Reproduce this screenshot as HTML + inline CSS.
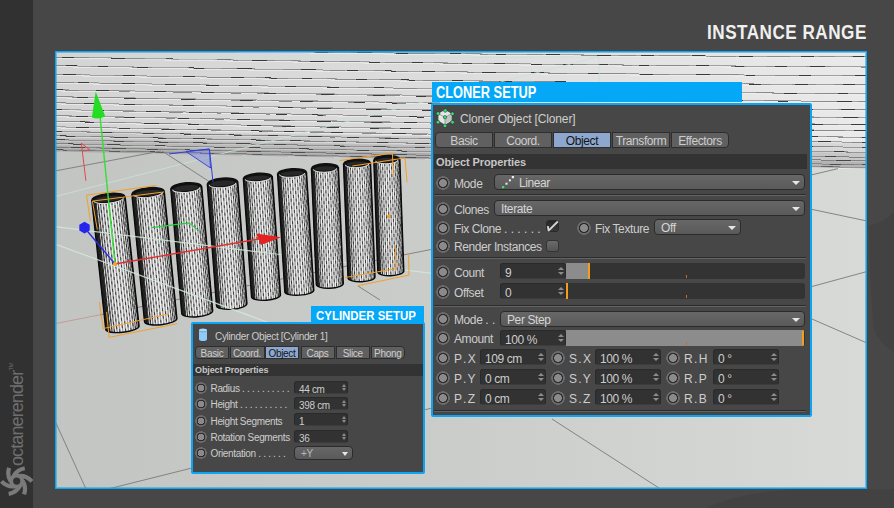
<!DOCTYPE html>
<html><head><meta charset="utf-8">
<style>
*{margin:0;padding:0;box-sizing:border-box}
html,body{width:894px;height:508px;overflow:hidden;background:#474747;font-family:"Liberation Sans",sans-serif}
.abs{position:absolute}
#strip{position:absolute;left:0;top:0;width:33px;height:508px;background:#313131}
#title{position:absolute;left:706.5px;top:20.5px;color:#f0f0f0;font-weight:bold;font-size:20px;line-height:22px;letter-spacing:0.6px;white-space:nowrap;transform-origin:0 0;transform:scaleX(0.855)}
#vp{position:absolute;left:55px;top:51px;width:812px;height:438px;background:#cacbca;overflow:hidden}
#vp svg{position:absolute;left:-55px;top:-51px}
#vpb{position:absolute;left:55px;top:51px;width:812px;height:438px;border:1px solid #0aa6f5;box-shadow:inset 0 0 0 1px rgba(10,166,245,.55)}
.hdr{position:absolute;background:#05a8f7;color:#fff;font-weight:bold;white-space:nowrap;overflow:hidden}
.ht1{position:absolute;left:4px;top:3px;font-size:16px;line-height:16px;transform-origin:0 0;transform:scaleX(0.80)}
.ht2{position:absolute;left:5px;top:4px;font-size:12.5px;line-height:13px;transform-origin:0 0;transform:scaleX(0.915)}
.panel{position:absolute;background:#474747;border:2px solid #0aa6f5;border-radius:2px}
.t,.t2{position:absolute;color:#cdcdcd;white-space:nowrap;font-size:12px;line-height:16px;letter-spacing:-0.4px;margin-top:1px}
.t2{font-size:10px;line-height:14px;letter-spacing:-0.33px;margin-top:1px}
.t2 .dots{letter-spacing:-0.3px}
.sp{letter-spacing:-1px}
.dots{letter-spacing:0}
.ttl{color:#cfcfcf;letter-spacing:-0.15px}
.rad{position:absolute;width:14px;height:14px;border-radius:50%;background:radial-gradient(circle at 50% 50%,#8a8a8a 0,#8a8a8a 3.6px,#2c2c2c 4.1px,#2c2c2c 4.9px,#6c6c6c 5.3px,#6c6c6c 6.8px,rgba(108,108,108,0) 7px)}
.rad.rs{width:11.9px;height:11.9px;background:radial-gradient(circle at 50% 50%,#8a8a8a 0,#8a8a8a 3px,#2c2c2c 3.5px,#2c2c2c 4.2px,#6c6c6c 4.5px,#6c6c6c 5.7px,rgba(108,108,108,0) 5.95px)}
.tab{position:absolute;background:#606060;border:1px solid #2e2e2e;color:#cdcdcd;font-size:12px;line-height:14px;padding-top:0.5px;text-align:center;letter-spacing:-0.4px;white-space:nowrap}
.tab.sel{background:#8ea7cf;color:#141414}
.tab.tl{border-radius:4px 0 0 4px}
.tab.tr{border-radius:0 4px 4px 0}
.tab2{font-size:10px;line-height:11px;padding-top:1px;letter-spacing:-0.33px}
.oph{position:absolute;background:#333333;color:#c6c6c6;font-weight:bold;font-size:11px;line-height:16.5px;padding-left:2px;letter-spacing:-0.1px;white-space:nowrap}
.oph2{font-size:9px;line-height:13px}
.dd{position:absolute;border:1px solid #2b2b2b;border-radius:4px;background:linear-gradient(#676767,#5a5a5a);color:#d5d5d5;font-size:12px;letter-spacing:-0.4px;white-space:nowrap}
.dd span{position:absolute;left:6px;top:0.6px;line-height:14px}
.dd .arr{position:absolute;right:4px;top:5.5px;width:0;height:0;border-left:4px solid transparent;border-right:4px solid transparent;border-top:4.5px solid #e6e6e6}
.dd2{font-size:10px;letter-spacing:-0.33px}
.dd2 span{line-height:12.5px;color:#b8b8b8}
.dd2 .arr{top:4.5px;border-left-width:3.5px;border-right-width:3.5px;border-top-width:4px}
.fld{position:absolute;background:#323232;border:1px solid #2a2a2a;border-bottom-color:#3c3c3c;border-radius:3px;color:#cdcdcd;font-size:12px;letter-spacing:-0.4px;white-space:nowrap}
.fld span{position:absolute;left:4px;top:1.6px;line-height:14px}
.fld .su,.fld .sd{position:absolute;right:1px;width:0;height:0;border-left:3px solid transparent;border-right:3px solid transparent}
.fld .su{top:3px;border-bottom:3.5px solid #8c8c8c}
.fld .sd{top:8px;border-top:3.5px solid #8c8c8c}
.fld2{font-size:10px;letter-spacing:-0.33px}
.fld2 span{line-height:11px}
.fld2 .su{top:2px;border-bottom-width:3px;border-left-width:2.5px;border-right-width:2.5px}
.fld2 .sd{top:6px;border-top-width:3px;border-left-width:2.5px;border-right-width:2.5px}
.sld{position:absolute;background:#333333;border-radius:0 3px 3px 0;overflow:hidden}
.sld b{position:absolute;left:0;top:0;height:16px;background:#8c8c8c}
.sld u{position:absolute;top:0;height:16px;width:2px;background:#f0a01e}
.sld em{position:absolute;left:120px;bottom:1px;width:1px;height:3px;background:#b07820}
.sep{position:absolute;height:2px;border-top:1px solid #2c2c2c;border-bottom:1px solid #636363}
.chk{position:absolute;width:13px;height:12px;border-radius:3px;background:linear-gradient(#6c6c6c,#545454);border:1px solid #333}
.chk.on{background:linear-gradient(#262626,#3a3a3a);border-color:#2a2a2a}
</style></head><body>
<svg style="position:absolute;left:0;top:0" width="894" height="508"><g fill="#424242"><path d="M869 226 Q884 222 894 212 L894 352 Q880 344 874 330 Q870 290 869 226 Z"/><path d="M706 508 Q740 492 800 489 L894 489 L894 508 Z"/></g></svg>
<div id="strip"><svg width="33" height="508" style="position:absolute;left:0;top:0">
<path d="M10.70 481.31Q6.74 475.35 9.10 467.94M13.70 475.90Q17.10 469.61 24.75 468.21M19.61 475.85Q26.76 475.52 31.90 481.37M22.70 481.00Q26.56 487.02 24.07 494.39M19.70 486.30Q16.30 492.59 8.65 493.99M13.98 486.45Q6.84 487.02 1.50 481.37" fill="none" stroke="#7a7a7a" stroke-width="4.2"/>
<circle cx="16.7" cy="481.1" r="5.6" fill="none" stroke="#7a7a7a" stroke-width="4"/>
<text transform="translate(22.6,466) rotate(-90)" font-family="Liberation Sans" font-size="18" letter-spacing="-0.9" fill="#6e6e6e">octanerender</text>
<text transform="translate(13.3,370.5) rotate(-90)" font-family="Liberation Sans" font-size="5.5" fill="#6e6e6e">TM</text>
</svg></div>
<div id="title">INSTANCE RANGE</div>
<div id="vp"><svg width="894" height="508" viewBox="0 0 894 508">
<defs>
<linearGradient id="floorg" x1="55" y1="0" x2="867" y2="0" gradientUnits="userSpaceOnUse">
<stop offset="0" stop-color="#c3c5c3"/><stop offset="0.5" stop-color="#cbcdcb"/><stop offset="1" stop-color="#d7dad7"/></linearGradient>
<linearGradient id="wallg" x1="55" y1="0" x2="867" y2="0" gradientUnits="userSpaceOnUse">
<stop offset="0" stop-color="#d3d4d3"/><stop offset="0.5" stop-color="#dcdddc"/><stop offset="1" stop-color="#e9eae9"/></linearGradient>
<linearGradient id="cylg" x1="0" y1="0" x2="1" y2="0">
<stop offset="0" stop-color="#050505"/><stop offset="0.12" stop-color="#262626"/><stop offset="0.27" stop-color="#b0b0b0"/><stop offset="0.5" stop-color="#d2d2d2"/><stop offset="0.78" stop-color="#c0c0c0"/><stop offset="0.9" stop-color="#4a4a4a"/><stop offset="1" stop-color="#080808"/></linearGradient>
</defs>
<rect x="0" y="0" width="894" height="508" fill="url(#floorg)"/>
<polygon points="55,0 867,0 867,168 55,151" fill="url(#wallg)"/>
<path d="M55 49.1Q461.0 56.2 867 58.1" stroke="#f0f0f0" stroke-width="1" opacity="0.7" fill="none" shape-rendering="crispEdges"/>
<path d="M55 48.0Q461.0 55.1 867 57.0" stroke="#a0a0a0" stroke-width="1" fill="none" shape-rendering="crispEdges"/>
<path d="M44.7 47.8L62.7 48.1M94.0 48.7L110.5 48.9M138.9 49.4L161.2 49.8M177.6 50.0L202.8 50.4M218.7 50.7L242.4 51.0M259.1 51.2L275.9 51.5M301.5 51.8L333.1 52.3M351.2 52.5L370.6 52.7M401.3 53.1L435.3 53.5M464.7 53.8L487.6 54.1M527.1 54.5L543.0 54.7M579.4 55.0L600.2 55.2M618.8 55.4L636.2 55.5M658.9 55.7L690.2 55.9M709.8 56.1L736.4 56.3M767.4 56.5L789.8 56.6M818.5 56.8L834.8 56.8M851.2 56.9L867.0 57.0" stroke="#8a8a8a" stroke-width="1" fill="none" shape-rendering="crispEdges"/>
<path d="M62.1 48.1L73.7 48.3M111.2 49.0L123.5 49.2M152.5 49.6L166.5 49.9M207.4 50.5L218.7 50.7M255.9 51.2L268.5 51.4M314.8 52.0L328.4 52.2M357.1 52.6L372.0 52.8M395.5 53.0L407.6 53.2M450.3 53.7L461.1 53.8M495.7 54.2L505.9 54.3M546.0 54.7L559.8 54.8M597.0 55.2L611.4 55.3M640.8 55.5L654.3 55.6M692.1 55.9L705.0 56.0M738.7 56.3L752.9 56.4M801.2 56.7L813.6 56.7M853.5 56.9L863.8 57.0" stroke="#3a3a3a" stroke-width="1" fill="none" shape-rendering="crispEdges"/>
<path d="M55 58.1Q461.0 65.5 867 68.1" stroke="#f0f0f0" stroke-width="1" opacity="0.7" fill="none" shape-rendering="crispEdges"/>
<path d="M55 57.0Q461.0 64.4 867 67.0" stroke="#a0a0a0" stroke-width="1" fill="none" shape-rendering="crispEdges"/>
<path d="M54.4 57.0L89.3 57.6M124.8 58.2L145.5 58.6M170.2 59.0L198.5 59.5M214.1 59.7L238.3 60.1M257.5 60.4L274.9 60.7M291.3 60.9L321.7 61.4M339.9 61.6L359.9 61.9M384.7 62.2L417.1 62.7M434.1 62.9L458.1 63.2M486.8 63.5L519.5 63.9M555.0 64.3L587.3 64.7M609.2 64.9L632.5 65.1M656.5 65.3L689.2 65.6M728.1 66.0L746.1 66.1M765.6 66.3L785.2 66.4M806.0 66.6L830.7 66.8M860.5 67.0L867.0 67.0" stroke="#8a8a8a" stroke-width="1" fill="none" shape-rendering="crispEdges"/>
<path d="M61.8 57.1L73.6 57.3M110.6 58.0L125.4 58.3M166.1 58.9L178.7 59.1M217.2 59.8L230.6 60.0M252.2 60.3L266.7 60.5M310.1 61.2L324.5 61.4M368.4 62.0L380.3 62.2M412.3 62.6L422.8 62.7M461.9 63.2L472.2 63.4M494.2 63.6L505.2 63.7M530.1 64.0L541.8 64.2M563.4 64.4L573.4 64.5M597.9 64.8L608.4 64.9M639.3 65.2L649.5 65.3M695.7 65.7L708.8 65.8M733.2 66.0L744.5 66.1M774.9 66.4L786.7 66.4M810.4 66.6L824.7 66.7" stroke="#3a3a3a" stroke-width="1" fill="none" shape-rendering="crispEdges"/>
<path d="M55 66.7Q461.0 74.2 867 77.1" stroke="#f0f0f0" stroke-width="1" opacity="0.7" fill="none" shape-rendering="crispEdges"/>
<path d="M55 65.6Q461.0 73.1 867 76.0" stroke="#a0a0a0" stroke-width="1" fill="none" shape-rendering="crispEdges"/>
<path d="M49.0 65.5L73.7 65.9M90.8 66.2L107.8 66.6M131.4 67.0L151.7 67.3M187.4 67.9L205.7 68.2M221.2 68.5L255.3 69.0M283.5 69.4L301.4 69.7M330.0 70.1L345.5 70.4M373.7 70.8L408.3 71.2M444.9 71.7L473.8 72.1M495.3 72.4L517.7 72.6M536.8 72.9L567.3 73.2M595.6 73.5L626.2 73.9M649.4 74.1L668.9 74.3M704.2 74.6L738.9 75.0M775.2 75.3L806.3 75.5M841.8 75.8L867.0 76.0" stroke="#8a8a8a" stroke-width="1" fill="none" shape-rendering="crispEdges"/>
<path d="M65.7 65.8L77.5 66.0M98.4 66.4L108.5 66.6M136.9 67.1L148.2 67.3M188.9 67.9L203.7 68.2M237.1 68.7L251.8 68.9M301.5 69.7L316.2 69.9M347.2 70.4L358.3 70.5M385.1 70.9L396.1 71.1M422.2 71.4L435.3 71.6M482.3 72.2L496.5 72.4M530.9 72.8L544.2 72.9M588.2 73.4L598.6 73.6M638.4 74.0L653.0 74.1M696.4 74.6L710.2 74.7M744.5 75.0L755.4 75.1M799.1 75.5L810.8 75.6M854.8 75.9L867.0 76.0" stroke="#3a3a3a" stroke-width="1" fill="none" shape-rendering="crispEdges"/>
<path d="M55 75.5Q461.0 82.9 867 86.1" stroke="#f0f0f0" stroke-width="1" opacity="0.7" fill="none" shape-rendering="crispEdges"/>
<path d="M55 74.4Q461.0 81.8 867 85.0" stroke="#a0a0a0" stroke-width="1" fill="none" shape-rendering="crispEdges"/>
<path d="M47.0 74.3L81.0 74.9M114.1 75.5L132.5 75.8M150.7 76.1L168.7 76.4M206.3 77.0L237.4 77.5M256.1 77.8L287.6 78.3M327.1 78.9L355.3 79.3M379.0 79.6L405.0 80.0M423.3 80.2L438.6 80.4M477.9 81.0L505.8 81.3M534.0 81.7L567.7 82.1M593.5 82.4L626.0 82.7M661.6 83.1L680.8 83.3M702.1 83.5L723.0 83.7M744.0 83.9L770.7 84.2M792.2 84.4L815.6 84.6M833.9 84.7L867.0 85.0" stroke="#8a8a8a" stroke-width="1" fill="none" shape-rendering="crispEdges"/>
<path d="M63.3 74.6L76.2 74.8M123.4 75.6L135.5 75.8M183.0 76.6L195.5 76.8M231.5 77.4L244.1 77.6M264.6 77.9L276.8 78.1M302.3 78.5L312.4 78.7M356.3 79.3L367.2 79.5M401.4 79.9L415.0 80.1M451.7 80.6L463.4 80.8M498.9 81.2L511.7 81.4M555.2 81.9L565.7 82.0M602.5 82.5L613.8 82.6M642.1 82.9L656.0 83.0M691.2 83.4L704.0 83.5M746.8 84.0L761.4 84.1M794.7 84.4L807.7 84.5M842.9 84.8L855.5 84.9" stroke="#3a3a3a" stroke-width="1" fill="none" shape-rendering="crispEdges"/>
<path d="M55 83.3Q461.0 91.1 867 95.1" stroke="#f0f0f0" stroke-width="1" opacity="0.7" fill="none" shape-rendering="crispEdges"/>
<path d="M55 82.2Q461.0 90.0 867 94.0" stroke="#a0a0a0" stroke-width="1" fill="none" shape-rendering="crispEdges"/>
<path d="M48.6 82.1L74.2 82.6M101.2 83.1L135.0 83.7M167.5 84.3L200.0 84.9M238.6 85.5L258.8 85.9M287.8 86.4L321.6 86.9M357.6 87.5L375.4 87.8M393.4 88.0L417.3 88.4M434.1 88.7L453.9 88.9M470.7 89.2L499.1 89.6M533.7 90.1L566.6 90.5M585.5 90.8L614.8 91.2M646.3 91.5L664.2 91.8M701.3 92.2L735.6 92.6M756.1 92.8L790.1 93.2M815.1 93.5L839.8 93.7" stroke="#8a8a8a" stroke-width="1" fill="none" shape-rendering="crispEdges"/>
<path d="M78.3 82.6L89.1 82.8M122.1 83.5L134.6 83.7M164.8 84.2L175.8 84.4M205.3 85.0L218.9 85.2M239.5 85.6L252.3 85.8M285.5 86.3L295.6 86.5M325.6 87.0L338.7 87.2M374.0 87.7L384.4 87.9M433.9 88.7L447.9 88.9M497.0 89.6L507.5 89.7M535.5 90.1L545.7 90.2M589.1 90.8L600.4 91.0M624.3 91.3L636.4 91.4M683.8 92.0L697.9 92.2M725.6 92.5L736.4 92.6M783.9 93.1L796.8 93.3M837.8 93.7L848.2 93.8" stroke="#3a3a3a" stroke-width="1" fill="none" shape-rendering="crispEdges"/>
<path d="M55 90.9Q461.0 98.7 867 103.1" stroke="#f0f0f0" stroke-width="1" opacity="0.7" fill="none" shape-rendering="crispEdges"/>
<path d="M55 89.8Q461.0 97.6 867 102.0" stroke="#a0a0a0" stroke-width="1" fill="none" shape-rendering="crispEdges"/>
<path d="M55.6 89.8L79.2 90.3M96.0 90.6L129.7 91.2M160.6 91.8L191.6 92.3M208.7 92.6L240.8 93.2M257.5 93.5L289.8 94.0M316.1 94.5L337.9 94.8M366.7 95.3L400.2 95.8M421.9 96.2L439.5 96.4M467.7 96.9L487.5 97.2M505.2 97.4L523.4 97.7M539.7 97.9L558.7 98.2M581.5 98.5L602.6 98.8M636.6 99.2L657.4 99.5M684.9 99.9L703.5 100.1M727.2 100.4L742.5 100.6M763.8 100.8L779.1 101.0M812.4 101.4L838.4 101.7M858.2 101.9L867.0 102.0" stroke="#8a8a8a" stroke-width="1" fill="none" shape-rendering="crispEdges"/>
<path d="M49.3 89.7L63.3 90.0M96.3 90.6L108.8 90.8M153.8 91.7L165.8 91.9M201.0 92.5L214.4 92.7M263.9 93.6L275.6 93.8M320.6 94.6L334.1 94.8M373.2 95.4L385.2 95.6M415.6 96.1L425.9 96.2M449.8 96.6L460.2 96.8M502.4 97.4L513.7 97.5M538.6 97.9L549.0 98.0M594.2 98.7L608.6 98.9M648.7 99.4L660.1 99.5M687.4 99.9L698.8 100.0M732.6 100.5L743.4 100.6M776.8 101.0L788.1 101.1M837.0 101.7L851.8 101.8" stroke="#3a3a3a" stroke-width="1" fill="none" shape-rendering="crispEdges"/>
<path d="M55 97.8Q461.0 106.0 867 111.1" stroke="#f0f0f0" stroke-width="1" opacity="0.7" fill="none" shape-rendering="crispEdges"/>
<path d="M55 96.7Q461.0 104.9 867 110.0" stroke="#a0a0a0" stroke-width="1" fill="none" shape-rendering="crispEdges"/>
<path d="M42.3 96.4L76.6 97.1M99.4 97.6L121.5 98.0M136.5 98.3L159.2 98.8M186.0 99.3L211.1 99.7M231.1 100.1L256.2 100.6M271.3 100.9L291.6 101.2M308.9 101.5L331.9 101.9M347.9 102.2L363.3 102.5M386.0 102.9L405.6 103.2M435.3 103.7L460.8 104.1M494.6 104.7L522.7 105.1M555.6 105.6L588.2 106.1M613.0 106.5L634.5 106.8M674.1 107.4L692.1 107.7M725.2 108.1L753.1 108.5M769.2 108.7L800.9 109.2M838.2 109.6L865.7 110.0" stroke="#8a8a8a" stroke-width="1" fill="none" shape-rendering="crispEdges"/>
<path d="M77.5 97.2L88.2 97.4M123.9 98.1L136.4 98.3M181.5 99.2L195.5 99.4M240.3 100.3L253.2 100.5M300.0 101.4L313.4 101.6M354.2 102.3L365.4 102.5M386.3 102.9L397.0 103.1M427.8 103.6L438.3 103.8M483.4 104.5L496.2 104.7M535.0 105.3L548.1 105.5M588.6 106.1L601.0 106.3M621.1 106.6L635.1 106.8M677.5 107.5L690.0 107.6M726.1 108.1L739.4 108.3M761.4 108.6L775.1 108.8M802.6 109.2L813.0 109.3M841.0 109.7L854.6 109.8" stroke="#3a3a3a" stroke-width="1" fill="none" shape-rendering="crispEdges"/>
<path d="M55 103.9Q461.0 112.9 867 119.1" stroke="#f0f0f0" stroke-width="1" opacity="0.7" fill="none" shape-rendering="crispEdges"/>
<path d="M55 102.8Q461.0 111.8 867 118.0" stroke="#a0a0a0" stroke-width="1" fill="none" shape-rendering="crispEdges"/>
<path d="M57.2 102.8L91.7 103.6M119.1 104.2L141.7 104.7M168.7 105.3L197.4 105.9M231.5 106.6L258.9 107.1M289.9 107.8L306.5 108.1M325.2 108.5L345.3 108.9M378.8 109.5L399.9 109.9M429.1 110.5L444.4 110.8M460.9 111.1L481.3 111.5M513.1 112.1L541.9 112.6M573.8 113.2L594.6 113.5M622.5 114.0L646.8 114.4M673.5 114.9L690.8 115.2M728.2 115.8L747.2 116.1M786.6 116.7L820.4 117.3M835.8 117.5L860.0 117.9" stroke="#8a8a8a" stroke-width="1" fill="none" shape-rendering="crispEdges"/>
<path d="M83.7 103.4L96.0 103.7M124.0 104.3L135.1 104.5M183.4 105.6L194.5 105.8M231.9 106.6L242.7 106.8M278.4 107.5L293.1 107.8M317.1 108.3L331.2 108.6M366.5 109.3L380.9 109.6M422.0 110.4L433.2 110.6M480.1 111.4L492.5 111.7M513.3 112.1L523.3 112.2M558.0 112.9L570.3 113.1M599.4 113.6L610.1 113.8M640.4 114.3L652.0 114.5M697.2 115.3L707.2 115.4M749.7 116.1L763.9 116.4M787.5 116.8L802.1 117.0M843.5 117.6L858.0 117.9" stroke="#3a3a3a" stroke-width="1" fill="none" shape-rendering="crispEdges"/>
<path d="M55 110.6Q461.0 119.6 867 126.1" stroke="#f0f0f0" stroke-width="1" opacity="0.7" fill="none" shape-rendering="crispEdges"/>
<path d="M55 109.5Q461.0 118.5 867 125.0" stroke="#a0a0a0" stroke-width="1" fill="none" shape-rendering="crispEdges"/>
<path d="M46.2 109.3L69.0 109.8M109.0 110.7L135.8 111.3M159.8 111.8L183.4 112.3M205.2 112.7L221.2 113.1M238.7 113.4L270.4 114.1M292.6 114.5L326.3 115.2M347.5 115.6L367.8 116.0M395.6 116.6L414.4 117.0M438.7 117.4L472.9 118.1M510.0 118.8L541.2 119.4M572.0 119.9L605.3 120.5M643.8 121.2L669.8 121.7M702.7 122.3L718.7 122.5M752.0 123.1L776.1 123.5M809.9 124.1L837.8 124.5M859.9 124.9L867.0 125.0" stroke="#8a8a8a" stroke-width="1" fill="none" shape-rendering="crispEdges"/>
<path d="M50.1 109.4L62.5 109.7M92.8 110.3L104.3 110.6M146.4 111.5L161.3 111.8M189.1 112.4L202.4 112.7M231.4 113.3L244.2 113.5M276.0 114.2L286.9 114.4M311.7 114.9L322.8 115.1M369.9 116.1L382.4 116.3M409.0 116.9L423.6 117.1M473.4 118.1L485.7 118.3M509.9 118.8L520.8 119.0M543.6 119.4L555.3 119.6M578.0 120.0L589.2 120.2M617.0 120.7L629.8 121.0M676.4 121.8L690.2 122.0M722.6 122.6L734.6 122.8M770.4 123.4L782.2 123.6M812.4 124.1L822.7 124.3M851.0 124.7L865.9 125.0" stroke="#3a3a3a" stroke-width="1" fill="none" shape-rendering="crispEdges"/>
<path d="M55 116.8Q461.0 125.5 867 132.1" stroke="#f0f0f0" stroke-width="1" opacity="0.7" fill="none" shape-rendering="crispEdges"/>
<path d="M55 115.7Q461.0 124.4 867 131.0" stroke="#a0a0a0" stroke-width="1" fill="none" shape-rendering="crispEdges"/>
<path d="M50.1 115.6L77.7 116.2M114.3 117.0L133.6 117.4M155.4 117.8L175.3 118.2M200.3 118.7L224.2 119.2M263.1 120.0L295.1 120.7M331.9 121.4L347.3 121.7M363.1 122.0L392.3 122.6M429.7 123.3L454.2 123.7M483.9 124.3L498.9 124.6M523.6 125.0L557.2 125.7M592.8 126.3L624.9 126.9M664.2 127.6L684.2 127.9M701.9 128.2L720.0 128.5M748.1 129.0L776.7 129.5M815.3 130.1L844.7 130.6" stroke="#8a8a8a" stroke-width="1" fill="none" shape-rendering="crispEdges"/>
<path d="M75.6 116.1L87.9 116.4M124.4 117.2L134.6 117.4M178.1 118.3L189.3 118.5M236.9 119.5L250.1 119.8M279.2 120.3L289.8 120.6M317.4 121.1L330.6 121.4M371.5 122.2L382.1 122.4M404.2 122.8L416.8 123.0M454.3 123.7L466.2 124.0M493.0 124.5L506.0 124.7M526.3 125.1L537.8 125.3M571.6 125.9L586.4 126.2M625.7 126.9L640.2 127.1M674.4 127.7L685.6 127.9M713.0 128.4L727.8 128.7M768.9 129.4L780.5 129.6M801.1 129.9L813.6 130.1M853.9 130.8L866.0 131.0" stroke="#3a3a3a" stroke-width="1" fill="none" shape-rendering="crispEdges"/>
<path d="M55 122.4Q461.0 131.4 867 138.6" stroke="#f0f0f0" stroke-width="1" opacity="0.7" fill="none" shape-rendering="crispEdges"/>
<path d="M55 121.3Q461.0 130.3 867 137.5" stroke="#a0a0a0" stroke-width="1" fill="none" shape-rendering="crispEdges"/>
<path d="M55.0 121.3L88.5 122.0M109.2 122.5L124.9 122.8M148.3 123.3L171.7 123.8M203.8 124.5L222.8 124.9M257.7 125.7L287.5 126.3M315.1 126.9L334.2 127.3M373.4 128.1L394.7 128.5M430.2 129.2L449.8 129.6M470.3 130.0L500.5 130.6M522.9 131.1L557.0 131.7M584.3 132.3L603.1 132.6M623.7 133.0L647.0 133.5M678.7 134.1L712.6 134.7M731.3 135.0L754.2 135.5M774.5 135.8L809.0 136.5M827.5 136.8L843.5 137.1M860.0 137.4L867.0 137.5" stroke="#8a8a8a" stroke-width="1" fill="none" shape-rendering="crispEdges"/>
<path d="M80.3 121.9L94.0 122.2M143.9 123.2L158.6 123.6M188.5 124.2L199.4 124.4M247.5 125.5L261.2 125.7M282.2 126.2L295.5 126.5M326.8 127.1L338.7 127.4M368.7 128.0L379.5 128.2M399.6 128.6L411.0 128.8M441.5 129.4L456.3 129.7M480.0 130.2L494.8 130.5M521.1 131.0L532.9 131.3M577.5 132.1L591.6 132.4M624.6 133.0L634.8 133.2M669.0 133.9L680.9 134.1M728.5 135.0L739.4 135.2M770.4 135.8L784.9 136.0M805.8 136.4L817.8 136.6M862.2 137.4L867.0 137.5" stroke="#3a3a3a" stroke-width="1" fill="none" shape-rendering="crispEdges"/>
<path d="M55 127.9Q461.0 136.4 867 143.6" stroke="#f0f0f0" stroke-width="1" opacity="0.7" fill="none" shape-rendering="crispEdges"/>
<path d="M55 126.8Q461.0 135.3 867 142.5" stroke="#a0a0a0" stroke-width="1" fill="none" shape-rendering="crispEdges"/>
<path d="M36.0 126.4L52.3 126.7M90.3 127.5L110.4 128.0M144.1 128.7L177.1 129.3M200.6 129.8L221.0 130.2M260.0 131.0L287.3 131.6M308.9 132.0L338.2 132.6M361.1 133.0L381.6 133.4M396.7 133.7L426.8 134.3M464.7 135.1L492.4 135.6M531.0 136.3L546.5 136.6M567.3 137.0L591.8 137.5M630.7 138.2L664.8 138.9M689.5 139.3L709.5 139.7M735.3 140.1L760.1 140.6M798.3 141.3L817.0 141.6M852.0 142.2L867.0 142.5" stroke="#8a8a8a" stroke-width="1" fill="none" shape-rendering="crispEdges"/>
<path d="M75.9 127.2L88.9 127.5M118.8 128.1L130.4 128.4M161.2 129.0L175.1 129.3M197.5 129.8L208.5 130.0M251.1 130.8L262.3 131.1M284.3 131.5L294.4 131.7M331.0 132.4L342.6 132.7M392.1 133.7L406.5 133.9M456.1 134.9L467.4 135.1M490.0 135.6L500.4 135.8M535.4 136.4L548.9 136.7M582.3 137.3L593.5 137.5M626.0 138.1L639.1 138.4M679.3 139.1L693.1 139.4M738.5 140.2L751.8 140.4M775.5 140.9L789.7 141.1M818.5 141.6L831.3 141.9M862.5 142.4L867.0 142.5" stroke="#3a3a3a" stroke-width="1" fill="none" shape-rendering="crispEdges"/>
<path d="M55 132.4Q461.0 141.0 867 148.6" stroke="#f0f0f0" stroke-width="1" opacity="0.7" fill="none" shape-rendering="crispEdges"/>
<path d="M55 131.3Q461.0 139.9 867 147.5" stroke="#a0a0a0" stroke-width="1" fill="none" shape-rendering="crispEdges"/>
<path d="M42.4 131.0L62.3 131.5M81.2 131.9L113.8 132.5M143.3 133.2L164.8 133.6M189.7 134.1L224.6 134.9M252.3 135.4L271.9 135.8M307.1 136.6L335.2 137.1M374.9 137.9L392.0 138.3M418.9 138.8L450.2 139.4M486.3 140.2L519.5 140.8M535.6 141.1L556.4 141.5M574.4 141.9L593.2 142.3M632.5 143.0L659.2 143.6M697.4 144.3L719.9 144.7M756.5 145.4L780.5 145.9M802.0 146.3L832.6 146.9" stroke="#8a8a8a" stroke-width="1" fill="none" shape-rendering="crispEdges"/>
<path d="M49.2 131.2L62.2 131.5M100.8 132.3L111.9 132.5M143.0 133.2L153.7 133.4M179.8 133.9L191.1 134.2M229.0 134.9L242.3 135.2M268.4 135.8L278.5 136.0M308.3 136.6L321.7 136.8M347.2 137.4L358.8 137.6M384.9 138.1L398.9 138.4M435.3 139.1L445.6 139.4M468.7 139.8L480.6 140.1M517.1 140.8L530.3 141.0M553.1 141.5L563.9 141.7M604.8 142.5L616.8 142.7M645.3 143.3L656.8 143.5M705.4 144.4L717.0 144.7M754.0 145.4L765.8 145.6M798.3 146.2L812.6 146.5M862.5 147.4L867.0 147.5" stroke="#3a3a3a" stroke-width="1" fill="none" shape-rendering="crispEdges"/>
<path d="M55 136.9Q461.0 145.5 867 153.5" stroke="#f0f0f0" stroke-width="1" opacity="0.7" fill="none" shape-rendering="crispEdges"/>
<path d="M55 135.8Q461.0 144.4 867 152.4" stroke="#a0a0a0" stroke-width="1" fill="none" shape-rendering="crispEdges"/>
<path d="M56.8 135.8L75.9 136.2M91.1 136.6L124.1 137.3M149.7 137.8L181.1 138.5M206.3 139.0L238.9 139.7M265.4 140.2L283.7 140.6M299.1 140.9L325.1 141.5M356.1 142.1L389.3 142.8M406.5 143.2L434.0 143.7M458.2 144.2L483.3 144.7M502.0 145.1L522.6 145.5M550.7 146.1L584.2 146.8M601.9 147.1L626.7 147.6M661.8 148.3L696.2 149.0M716.1 149.4L733.6 149.8M772.2 150.5L806.7 151.2M833.8 151.7L849.9 152.1" stroke="#8a8a8a" stroke-width="1" fill="none" shape-rendering="crispEdges"/>
<path d="M60.5 135.9L75.0 136.2M113.6 137.0L127.8 137.3M152.6 137.9L166.5 138.2M193.2 138.7L205.2 139.0M250.6 139.9L264.7 140.2M290.2 140.8L301.3 141.0M333.3 141.6L345.9 141.9M377.4 142.6L388.0 142.8M415.4 143.3L429.0 143.6M476.0 144.6L486.2 144.8M523.0 145.5L536.8 145.8M558.0 146.2L572.2 146.5M595.7 147.0L608.7 147.3M645.2 148.0L658.3 148.3M687.5 148.9L699.6 149.1M737.1 149.8L749.2 150.1M789.0 150.9L801.2 151.1M834.4 151.8L844.5 152.0" stroke="#3a3a3a" stroke-width="1" fill="none" shape-rendering="crispEdges"/>
<path d="M55 140.8Q461.0 149.8 867 158.5" stroke="#f0f0f0" stroke-width="1" opacity="0.7" fill="none" shape-rendering="crispEdges"/>
<path d="M55 139.7Q461.0 148.7 867 157.4" stroke="#a0a0a0" stroke-width="1" fill="none" shape-rendering="crispEdges"/>
<path d="M49.7 139.6L69.4 140.0M103.5 140.8L134.1 141.5M160.5 142.0L179.1 142.5M206.0 143.0L223.1 143.4M241.3 143.8L264.9 144.3M282.2 144.7L306.1 145.2M333.8 145.9L349.6 146.2M380.5 146.9L397.2 147.2M430.5 148.0L461.1 148.6M488.9 149.2L504.9 149.6M532.5 150.2L555.1 150.7M593.9 151.5L611.6 151.9M648.0 152.7L682.9 153.4M716.2 154.2L747.5 154.8M767.4 155.3L802.0 156.0M829.3 156.6L863.5 157.3" stroke="#8a8a8a" stroke-width="1" fill="none" shape-rendering="crispEdges"/>
<path d="M51.6 139.6L65.5 139.9M113.5 141.0L123.8 141.2M154.3 141.9L168.1 142.2M192.9 142.8L207.3 143.1M235.6 143.7L249.7 144.0M274.0 144.5L286.5 144.8M334.1 145.9L345.1 146.1M373.0 146.7L385.5 147.0M415.1 147.6L425.3 147.9M450.8 148.4L461.6 148.6M509.7 149.7L523.1 150.0M569.9 151.0L580.8 151.2M624.3 152.2L634.9 152.4M670.8 153.2L684.0 153.5M714.8 154.1L729.2 154.4M765.8 155.2L778.7 155.5M825.2 156.5L835.7 156.7" stroke="#3a3a3a" stroke-width="1" fill="none" shape-rendering="crispEdges"/>
<path d="M55 144.7Q461.0 153.4 867 162.1" stroke="#f0f0f0" stroke-width="1" opacity="0.7" fill="none" shape-rendering="crispEdges"/>
<path d="M55 143.6Q461.0 152.3 867 161.0" stroke="#a0a0a0" stroke-width="1" fill="none" shape-rendering="crispEdges"/>
<path d="M53.9 143.6L76.8 144.1M111.7 144.8L132.0 145.3M171.8 146.1L198.3 146.7M222.3 147.2L252.6 147.8M278.7 148.4L297.2 148.8M330.8 149.5L346.8 149.9M382.3 150.6L402.3 151.0M433.3 151.7L468.0 152.5M497.6 153.1L525.9 153.7M548.7 154.2L563.8 154.5M579.6 154.8L597.6 155.2M628.0 155.9L651.7 156.4M679.5 157.0L712.4 157.7M730.7 158.1L750.2 158.5M781.6 159.2L797.0 159.5M812.1 159.8L834.2 160.3M851.8 160.7L867.0 161.0" stroke="#8a8a8a" stroke-width="1" fill="none" shape-rendering="crispEdges"/>
<path d="M68.3 143.9L81.3 144.2M107.4 144.7L120.5 145.0M154.8 145.7L165.5 146.0M213.6 147.0L224.8 147.2M249.3 147.8L259.7 148.0M298.9 148.8L313.2 149.1M356.7 150.1L368.7 150.3M396.6 150.9L406.7 151.1M446.0 152.0L458.9 152.3M489.4 152.9L502.6 153.2M535.9 153.9L550.6 154.2M592.6 155.1L603.8 155.4M650.9 156.4L661.2 156.6M697.1 157.4L709.1 157.6M736.3 158.2L746.6 158.4M789.9 159.3L800.0 159.6M836.5 160.3L851.2 160.7" stroke="#3a3a3a" stroke-width="1" fill="none" shape-rendering="crispEdges"/>
<path d="M55 148.1Q461.0 157.1 867 166.1" stroke="#f0f0f0" stroke-width="1" opacity="0.7" fill="none" shape-rendering="crispEdges"/>
<path d="M55 147.0Q461.0 156.0 867 165.0" stroke="#a0a0a0" stroke-width="1" fill="none" shape-rendering="crispEdges"/>
<path d="M41.0 146.7L68.1 147.3M95.8 147.9L123.7 148.5M159.0 149.3L177.5 149.7M200.2 150.2L221.2 150.7M237.4 151.0L270.2 151.8M304.8 152.5L334.1 153.2M349.3 153.5L381.1 154.2M414.8 155.0L439.1 155.5M472.6 156.3L496.7 156.8M517.3 157.2L534.4 157.6M555.2 158.1L571.0 158.4M594.4 159.0L624.4 159.6M656.8 160.3L688.7 161.0M721.5 161.8L741.8 162.2M770.6 162.9L794.4 163.4M829.1 164.2L854.5 164.7" stroke="#8a8a8a" stroke-width="1" fill="none" shape-rendering="crispEdges"/>
<path d="M70.7 147.3L85.5 147.7M112.0 148.3L126.4 148.6M146.9 149.0L158.2 149.3M185.3 149.9L199.0 150.2M247.3 151.3L261.0 151.6M290.9 152.2L305.3 152.5M335.1 153.2L346.3 153.5M393.5 154.5L406.7 154.8M447.5 155.7L460.8 156.0M510.2 157.1L522.5 157.4M567.7 158.4L581.2 158.7M626.9 159.7L639.1 159.9M680.8 160.9L693.7 161.2M722.9 161.8L734.0 162.1M772.7 162.9L783.1 163.1M830.4 164.2L841.1 164.4M861.9 164.9L867.0 165.0" stroke="#3a3a3a" stroke-width="1" fill="none" shape-rendering="crispEdges"/>
<path d="M55 150.9Q461.0 159.8 867 168.7" stroke="#f0f0f0" stroke-width="1" opacity="0.7" fill="none" shape-rendering="crispEdges"/>
<path d="M55 149.8Q461.0 158.7 867 167.6" stroke="#a0a0a0" stroke-width="1" fill="none" shape-rendering="crispEdges"/>
<path d="M45.3 149.6L63.2 150.0M78.9 150.3L94.7 150.7M127.0 151.4L154.7 152.0M187.2 152.7L216.9 153.3M233.5 153.7L260.3 154.3M284.4 154.8L315.8 155.5M351.3 156.3L384.1 157.0M400.7 157.4L433.1 158.1M471.0 158.9L504.8 159.7M522.5 160.0L541.6 160.5M559.4 160.9L575.1 161.2M611.3 162.0L642.6 162.7M673.4 163.4L704.9 164.0M735.7 164.7L756.4 165.2M773.9 165.6L790.9 165.9M824.8 166.7L843.9 167.1M866.9 167.6L867.0 167.6" stroke="#8a8a8a" stroke-width="1" fill="none" shape-rendering="crispEdges"/>
<path d="M55.3 149.8L66.7 150.1M108.2 151.0L120.0 151.2M149.6 151.9L164.4 152.2M199.6 153.0L213.8 153.3M252.4 154.1L262.5 154.3M294.9 155.1L307.1 155.3M350.3 156.3L362.0 156.5M403.1 157.4L415.8 157.7M442.3 158.3L456.6 158.6M479.4 159.1L493.5 159.4M518.6 160.0L528.6 160.2M554.6 160.8L568.5 161.1M617.8 162.1L627.8 162.4M662.5 163.1L675.0 163.4M718.9 164.4L729.8 164.6M764.7 165.4L776.4 165.6M821.4 166.6L832.7 166.8" stroke="#3a3a3a" stroke-width="1" fill="none" shape-rendering="crispEdges"/>
<polygon points="55,131 867,143.0 867,153.0 55,139" fill="#6a6a6a" opacity="0.14"/>
<polygon points="55,139 867,153.0 867,161.75 55,146" fill="#6a6a6a" opacity="0.28"/>
<polygon points="55,146 867,161.75 867,168.0 55,151" fill="#6a6a6a" opacity="0.42"/>
<path d="M55 60L598.6 56.8L600 103M598.6 56.8L55 196.6" stroke="#c8e4d2" stroke-width="1" fill="none" opacity="0.8"/>
<line x1="55" y1="151" x2="867" y2="168" stroke="#9a9a9a" stroke-width="0.8"/>
<line x1="55" y1="171" x2="161" y2="151" stroke="#7a7a7a" stroke-width="0.9"/>
<line x1="162" y1="151" x2="213" y2="184" stroke="#7a7a7a" stroke-width="0.9"/>
<line x1="55" y1="421" x2="86" y2="489" stroke="#7a7a7a" stroke-width="0.9"/>
<line x1="108" y1="489" x2="432" y2="408" stroke="#7a7a7a" stroke-width="0.9"/>
<line x1="552" y1="419" x2="690" y2="508" stroke="#7a7a7a" stroke-width="0.9"/>
<line x1="812" y1="286.5" x2="867" y2="271.5" stroke="#7a7a7a" stroke-width="0.9"/>
<line x1="812" y1="319" x2="867" y2="343" stroke="#7a7a7a" stroke-width="0.9"/>
<line x1="812" y1="209.4" x2="867" y2="221" stroke="#7a7a7a" stroke-width="0.9"/>
<line x1="812" y1="174.8" x2="838" y2="168.6" stroke="#7a7a7a" stroke-width="0.9"/>
<line x1="100" y1="314.8" x2="432" y2="249.3" stroke="#7a7a7a" stroke-width="0.9"/>
<line x1="358" y1="286" x2="380" y2="300" stroke="#7a7a7a" stroke-width="0.9"/>
<line x1="280" y1="254.5" x2="432" y2="273.3" stroke="#d2eadc" stroke-width="1.2" opacity="0.85"/>
<g transform="translate(108.4,198) rotate(-6.17)"><path d="M-16.75 0 L-16.75 130.3 A16.75 4.8 0 0 0 16.75 130.3 L16.75 0 Z" fill="url(#cylg)"/><path d="M-11.84 3.09L-11.84 133.34M-9.61 3.68L-9.61 133.93M-7.08 4.16L-7.08 134.41M-4.34 4.51L-4.34 134.77M-1.46 4.73L-1.46 134.98M1.46 4.80L1.46 135.05M4.34 4.73L4.34 134.98M7.08 4.51L7.08 134.77M9.61 4.16L9.61 134.41M11.84 3.68L11.84 133.93M13.72 3.09L13.72 133.34M15.18 2.40L15.18 132.65" stroke="#ffffff" stroke-width="0.9" fill="none" opacity="0.9"/><path d="M-16.50 0.83L-16.50 131.09M-15.74 1.64L-15.74 131.90M-14.51 2.40L-14.51 132.65M-12.83 3.09L-12.83 133.34M-10.77 3.68L-10.77 133.93M-8.38 4.16L-8.38 134.41M-5.73 4.51L-5.73 134.77M-2.91 4.73L-2.91 134.98M-0.00 4.80L-0.00 135.05M2.91 4.73L2.91 134.98M5.73 4.51L5.73 134.77M8.37 4.16L8.37 134.41M10.77 3.68L10.77 133.93M12.83 3.09L12.83 133.34M14.51 2.40L14.51 132.65M15.74 1.64L15.74 131.90M16.50 0.83L16.50 131.09" stroke="#505050" stroke-width="0.5" fill="none" opacity="0.7"/><g stroke="#151515" stroke-width="0.85" stroke-dasharray="3 4.5" fill="none" opacity="0.8"><path d="M-16.50 0.83L-16.50 131.09" stroke-dashoffset="4.0"/><path d="M-15.74 1.64L-15.74 131.90" stroke-dashoffset="0.2"/><path d="M-14.51 2.40L-14.51 132.65" stroke-dashoffset="4.3"/><path d="M-12.83 3.09L-12.83 133.34" stroke-dashoffset="0.4"/><path d="M-10.77 3.68L-10.77 133.93" stroke-dashoffset="3.8"/><path d="M-8.38 4.16L-8.38 134.41" stroke-dashoffset="0.5"/><path d="M-5.73 4.51L-5.73 134.77" stroke-dashoffset="3.8"/><path d="M-2.91 4.73L-2.91 134.98" stroke-dashoffset="0.6"/><path d="M-0.00 4.80L-0.00 135.05" stroke-dashoffset="4.3"/><path d="M2.91 4.73L2.91 134.98" stroke-dashoffset="0.6"/><path d="M5.73 4.51L5.73 134.77" stroke-dashoffset="4.3"/><path d="M8.37 4.16L8.37 134.41" stroke-dashoffset="0.3"/><path d="M10.77 3.68L10.77 133.93" stroke-dashoffset="4.1"/><path d="M12.83 3.09L12.83 133.34" stroke-dashoffset="0.3"/><path d="M14.51 2.40L14.51 132.65" stroke-dashoffset="4.5"/><path d="M15.74 1.64L15.74 131.90" stroke-dashoffset="0.1"/><path d="M16.50 0.83L16.50 131.09" stroke-dashoffset="4.5"/></g><path d="M-16.75 0 L-16.75 130.3 A16.75 4.8 0 0 0 16.75 130.3 L16.75 0" stroke="#0a0a0a" stroke-width="1.4" fill="none"/><ellipse cx="0" cy="0" rx="17.05" ry="5.1" fill="#101010"/><ellipse cx="0" cy="0.8" rx="13.75" ry="2.8" fill="#333333" opacity="0.7"/><path d="M-14.95 1.2 A14.95 4.0 0 0 0 14.95 1.2" stroke="#d8d8d8" stroke-width="1" fill="none"/></g>
<g transform="translate(148,192.2) rotate(-5.68)"><path d="M-16.25 0 L-16.25 128.4 A16.25 4.8 0 0 0 16.25 128.4 L16.25 0 Z" fill="url(#cylg)"/><path d="M-11.49 3.09L-11.49 131.51M-9.32 3.68L-9.32 132.11M-6.87 4.16L-6.87 132.59M-4.21 4.51L-4.21 132.94M-1.42 4.73L-1.42 133.16M1.42 4.80L1.42 133.23M4.21 4.73L4.21 133.16M6.87 4.51L6.87 132.94M9.32 4.16L9.32 132.59M11.49 3.68L11.49 132.11M13.31 3.09L13.31 131.51M14.73 2.40L14.73 130.83" stroke="#ffffff" stroke-width="0.9" fill="none" opacity="0.9"/><path d="M-16.00 0.83L-16.00 129.26M-15.27 1.64L-15.27 130.07M-14.07 2.40L-14.07 130.83M-12.45 3.09L-12.45 131.51M-10.45 3.68L-10.45 132.11M-8.13 4.16L-8.13 132.59M-5.56 4.51L-5.56 132.94M-2.82 4.73L-2.82 133.16M-0.00 4.80L-0.00 133.23M2.82 4.73L2.82 133.16M5.56 4.51L5.56 132.94M8.12 4.16L8.12 132.59M10.45 3.68L10.45 132.11M12.45 3.09L12.45 131.51M14.07 2.40L14.07 130.83M15.27 1.64L15.27 130.07M16.00 0.83L16.00 129.26" stroke="#505050" stroke-width="0.5" fill="none" opacity="0.7"/><g stroke="#151515" stroke-width="0.85" stroke-dasharray="3 4.5" fill="none" opacity="0.8"><path d="M-16.00 0.83L-16.00 129.26" stroke-dashoffset="3.8"/><path d="M-15.27 1.64L-15.27 130.07" stroke-dashoffset="0.2"/><path d="M-14.07 2.40L-14.07 130.83" stroke-dashoffset="4.0"/><path d="M-12.45 3.09L-12.45 131.51" stroke-dashoffset="0.7"/><path d="M-10.45 3.68L-10.45 132.11" stroke-dashoffset="4.2"/><path d="M-8.13 4.16L-8.13 132.59" stroke-dashoffset="0.3"/><path d="M-5.56 4.51L-5.56 132.94" stroke-dashoffset="4.5"/><path d="M-2.82 4.73L-2.82 133.16" stroke-dashoffset="0.2"/><path d="M-0.00 4.80L-0.00 133.23" stroke-dashoffset="4.1"/><path d="M2.82 4.73L2.82 133.16" stroke-dashoffset="0.4"/><path d="M5.56 4.51L5.56 132.94" stroke-dashoffset="4.4"/><path d="M8.12 4.16L8.12 132.59" stroke-dashoffset="0.6"/><path d="M10.45 3.68L10.45 132.11" stroke-dashoffset="4.3"/><path d="M12.45 3.09L12.45 131.51" stroke-dashoffset="0.3"/><path d="M14.07 2.40L14.07 130.83" stroke-dashoffset="4.0"/><path d="M15.27 1.64L15.27 130.07" stroke-dashoffset="0.1"/><path d="M16.00 0.83L16.00 129.26" stroke-dashoffset="4.4"/></g><path d="M-16.25 0 L-16.25 128.4 A16.25 4.8 0 0 0 16.25 128.4 L16.25 0" stroke="#0a0a0a" stroke-width="1.4" fill="none"/><ellipse cx="0" cy="0" rx="16.55" ry="5.1" fill="#101010"/><ellipse cx="0" cy="0.8" rx="13.25" ry="2.8" fill="#333333" opacity="0.7"/><path d="M-14.45 1.2 A14.45 4.0 0 0 0 14.45 1.2" stroke="#d8d8d8" stroke-width="1" fill="none"/></g>
<g transform="translate(186.2,187.2) rotate(-5.04)"><path d="M-15.5 0 L-15.5 125.3 A15.5 4.8 0 0 0 15.5 125.3 L15.5 0 Z" fill="url(#cylg)"/><path d="M-10.96 3.09L-10.96 128.37M-8.89 3.68L-8.89 128.96M-6.55 4.16L-6.55 129.44M-4.01 4.51L-4.01 129.79M-1.35 4.73L-1.35 130.01M1.35 4.80L1.35 130.08M4.01 4.73L4.01 130.01M6.55 4.51L6.55 129.79M8.89 4.16L8.89 129.44M10.96 3.68L10.96 128.96M12.70 3.09L12.70 128.37M14.05 2.40L14.05 127.68" stroke="#ffffff" stroke-width="0.9" fill="none" opacity="0.9"/><path d="M-15.26 0.83L-15.26 126.12M-14.57 1.64L-14.57 126.93M-13.42 2.40L-13.42 127.68M-11.87 3.09L-11.87 128.37M-9.96 3.68L-9.96 128.96M-7.75 4.16L-7.75 129.44M-5.30 4.51L-5.30 129.79M-2.69 4.73L-2.69 130.01M-0.00 4.80L-0.00 130.08M2.69 4.73L2.69 130.01M5.30 4.51L5.30 129.79M7.75 4.16L7.75 129.44M9.96 3.68L9.96 128.96M11.87 3.09L11.87 128.37M13.42 2.40L13.42 127.68M14.57 1.64L14.57 126.93M15.26 0.83L15.26 126.12" stroke="#505050" stroke-width="0.5" fill="none" opacity="0.7"/><g stroke="#151515" stroke-width="0.85" stroke-dasharray="3 4.5" fill="none" opacity="0.8"><path d="M-15.26 0.83L-15.26 126.12" stroke-dashoffset="4.3"/><path d="M-14.57 1.64L-14.57 126.93" stroke-dashoffset="0.6"/><path d="M-13.42 2.40L-13.42 127.68" stroke-dashoffset="3.9"/><path d="M-11.87 3.09L-11.87 128.37" stroke-dashoffset="0.4"/><path d="M-9.96 3.68L-9.96 128.96" stroke-dashoffset="4.4"/><path d="M-7.75 4.16L-7.75 129.44" stroke-dashoffset="0.5"/><path d="M-5.30 4.51L-5.30 129.79" stroke-dashoffset="3.9"/><path d="M-2.69 4.73L-2.69 130.01" stroke-dashoffset="0.4"/><path d="M-0.00 4.80L-0.00 130.08" stroke-dashoffset="4.5"/><path d="M2.69 4.73L2.69 130.01" stroke-dashoffset="0.2"/><path d="M5.30 4.51L5.30 129.79" stroke-dashoffset="3.9"/><path d="M7.75 4.16L7.75 129.44" stroke-dashoffset="0.2"/><path d="M9.96 3.68L9.96 128.96" stroke-dashoffset="4.3"/><path d="M11.87 3.09L11.87 128.37" stroke-dashoffset="0.7"/><path d="M13.42 2.40L13.42 127.68" stroke-dashoffset="3.9"/><path d="M14.57 1.64L14.57 126.93" stroke-dashoffset="0.1"/><path d="M15.26 0.83L15.26 126.12" stroke-dashoffset="3.9"/></g><path d="M-15.5 0 L-15.5 125.3 A15.5 4.8 0 0 0 15.5 125.3 L15.5 0" stroke="#0a0a0a" stroke-width="1.4" fill="none"/><ellipse cx="0" cy="0" rx="15.8" ry="5.1" fill="#101010"/><ellipse cx="0" cy="0.8" rx="12.5" ry="2.8" fill="#333333" opacity="0.7"/><path d="M-13.7 1.2 A13.7 4.0 0 0 0 13.7 1.2" stroke="#d8d8d8" stroke-width="1" fill="none"/></g>
<g transform="translate(222.5,182.5) rotate(-4.31)"><path d="M-15.25 0 L-15.25 122.3 A15.25 4.8 0 0 0 15.25 122.3 L15.25 0 Z" fill="url(#cylg)"/><path d="M-10.78 3.09L-10.78 125.43M-8.75 3.68L-8.75 126.02M-6.44 4.16L-6.44 126.50M-3.95 4.51L-3.95 126.86M-1.33 4.73L-1.33 127.07M1.33 4.80L1.33 127.15M3.95 4.73L3.95 127.07M6.44 4.51L6.44 126.86M8.75 4.16L8.75 126.50M10.78 3.68L10.78 126.02M12.49 3.09L12.49 125.43M13.82 2.40L13.82 124.75" stroke="#ffffff" stroke-width="0.9" fill="none" opacity="0.9"/><path d="M-15.02 0.83L-15.02 123.18M-14.33 1.64L-14.33 123.99M-13.21 2.40L-13.21 124.75M-11.68 3.09L-11.68 125.43M-9.80 3.68L-9.80 126.02M-7.63 4.16L-7.63 126.50M-5.22 4.51L-5.22 126.86M-2.65 4.73L-2.65 127.07M-0.00 4.80L-0.00 127.15M2.65 4.73L2.65 127.07M5.22 4.51L5.22 126.86M7.62 4.16L7.62 126.50M9.80 3.68L9.80 126.02M11.68 3.09L11.68 125.43M13.21 2.40L13.21 124.75M14.33 1.64L14.33 123.99M15.02 0.83L15.02 123.18" stroke="#505050" stroke-width="0.5" fill="none" opacity="0.7"/><g stroke="#151515" stroke-width="0.85" stroke-dasharray="3 4.5" fill="none" opacity="0.8"><path d="M-15.02 0.83L-15.02 123.18" stroke-dashoffset="4.0"/><path d="M-14.33 1.64L-14.33 123.99" stroke-dashoffset="0.4"/><path d="M-13.21 2.40L-13.21 124.75" stroke-dashoffset="3.9"/><path d="M-11.68 3.09L-11.68 125.43" stroke-dashoffset="0.3"/><path d="M-9.80 3.68L-9.80 126.02" stroke-dashoffset="3.9"/><path d="M-7.63 4.16L-7.63 126.50" stroke-dashoffset="0.8"/><path d="M-5.22 4.51L-5.22 126.86" stroke-dashoffset="4.3"/><path d="M-2.65 4.73L-2.65 127.07" stroke-dashoffset="0.1"/><path d="M-0.00 4.80L-0.00 127.15" stroke-dashoffset="4.5"/><path d="M2.65 4.73L2.65 127.07" stroke-dashoffset="0.1"/><path d="M5.22 4.51L5.22 126.86" stroke-dashoffset="4.1"/><path d="M7.62 4.16L7.62 126.50" stroke-dashoffset="0.8"/><path d="M9.80 3.68L9.80 126.02" stroke-dashoffset="4.4"/><path d="M11.68 3.09L11.68 125.43" stroke-dashoffset="0.6"/><path d="M13.21 2.40L13.21 124.75" stroke-dashoffset="4.1"/><path d="M14.33 1.64L14.33 123.99" stroke-dashoffset="0.2"/><path d="M15.02 0.83L15.02 123.18" stroke-dashoffset="4.3"/></g><path d="M-15.25 0 L-15.25 122.3 A15.25 4.8 0 0 0 15.25 122.3 L15.25 0" stroke="#0a0a0a" stroke-width="1.4" fill="none"/><ellipse cx="0" cy="0" rx="15.55" ry="5.1" fill="#101010"/><ellipse cx="0" cy="0.8" rx="12.25" ry="2.8" fill="#333333" opacity="0.7"/><path d="M-13.45 1.2 A13.45 4.0 0 0 0 13.45 1.2" stroke="#d8d8d8" stroke-width="1" fill="none"/></g>
<g transform="translate(257.8,177.1) rotate(-3.95)"><path d="M-14.5 0 L-14.5 119.2 A14.5 4.2 0 0 0 14.5 119.2 L14.5 0 Z" fill="url(#cylg)"/><path d="M-10.25 2.70L-10.25 121.88M-8.32 3.22L-8.32 122.40M-6.13 3.64L-6.13 122.82M-3.75 3.95L-3.75 123.13M-1.26 4.14L-1.26 123.32M1.26 4.20L1.26 123.38M3.75 4.14L3.75 123.32M6.13 3.95L6.13 123.13M8.32 3.64L8.32 122.82M10.25 3.22L10.25 122.40M11.88 2.70L11.88 121.88M13.14 2.10L13.14 121.28" stroke="#ffffff" stroke-width="0.9" fill="none" opacity="0.9"/><path d="M-14.28 0.73L-14.28 119.91M-13.63 1.44L-13.63 120.62M-12.56 2.10L-12.56 121.28M-11.11 2.70L-11.11 121.88M-9.32 3.22L-9.32 122.40M-7.25 3.64L-7.25 122.82M-4.96 3.95L-4.96 123.13M-2.52 4.14L-2.52 123.32M-0.00 4.20L-0.00 123.38M2.52 4.14L2.52 123.32M4.96 3.95L4.96 123.13M7.25 3.64L7.25 122.82M9.32 3.22L9.32 122.40M11.11 2.70L11.11 121.88M12.56 2.10L12.56 121.28M13.63 1.44L13.63 120.62M14.28 0.73L14.28 119.91" stroke="#505050" stroke-width="0.5" fill="none" opacity="0.7"/><g stroke="#151515" stroke-width="0.85" stroke-dasharray="3 4.5" fill="none" opacity="0.8"><path d="M-14.28 0.73L-14.28 119.91" stroke-dashoffset="3.8"/><path d="M-13.63 1.44L-13.63 120.62" stroke-dashoffset="0.2"/><path d="M-12.56 2.10L-12.56 121.28" stroke-dashoffset="4.1"/><path d="M-11.11 2.70L-11.11 121.88" stroke-dashoffset="0.0"/><path d="M-9.32 3.22L-9.32 122.40" stroke-dashoffset="4.1"/><path d="M-7.25 3.64L-7.25 122.82" stroke-dashoffset="0.6"/><path d="M-4.96 3.95L-4.96 123.13" stroke-dashoffset="4.3"/><path d="M-2.52 4.14L-2.52 123.32" stroke-dashoffset="0.4"/><path d="M-0.00 4.20L-0.00 123.38" stroke-dashoffset="4.3"/><path d="M2.52 4.14L2.52 123.32" stroke-dashoffset="0.4"/><path d="M4.96 3.95L4.96 123.13" stroke-dashoffset="3.9"/><path d="M7.25 3.64L7.25 122.82" stroke-dashoffset="0.5"/><path d="M9.32 3.22L9.32 122.40" stroke-dashoffset="4.1"/><path d="M11.11 2.70L11.11 121.88" stroke-dashoffset="0.6"/><path d="M12.56 2.10L12.56 121.28" stroke-dashoffset="4.5"/><path d="M13.63 1.44L13.63 120.62" stroke-dashoffset="0.3"/><path d="M14.28 0.73L14.28 119.91" stroke-dashoffset="4.2"/></g><path d="M-14.5 0 L-14.5 119.2 A14.5 4.2 0 0 0 14.5 119.2 L14.5 0" stroke="#0a0a0a" stroke-width="1.4" fill="none"/><ellipse cx="0" cy="0" rx="14.8" ry="4.5" fill="#101010"/><ellipse cx="0" cy="0.8" rx="11.5" ry="2.2" fill="#333333" opacity="0.7"/><path d="M-12.7 1.2 A12.7 3.4000000000000004 0 0 0 12.7 1.2" stroke="#d8d8d8" stroke-width="1" fill="none"/></g>
<g transform="translate(292,172.6) rotate(-3.53)"><path d="M-14.5 0 L-14.5 118.6 A14.5 4.2 0 0 0 14.5 118.6 L14.5 0 Z" fill="url(#cylg)"/><path d="M-10.25 2.70L-10.25 121.32M-8.32 3.22L-8.32 121.84M-6.13 3.64L-6.13 122.26M-3.75 3.95L-3.75 122.57M-1.26 4.14L-1.26 122.76M1.26 4.20L1.26 122.82M3.75 4.14L3.75 122.76M6.13 3.95L6.13 122.57M8.32 3.64L8.32 122.26M10.25 3.22L10.25 121.84M11.88 2.70L11.88 121.32M13.14 2.10L13.14 120.72" stroke="#ffffff" stroke-width="0.9" fill="none" opacity="0.9"/><path d="M-14.28 0.73L-14.28 119.35M-13.63 1.44L-13.63 120.06M-12.56 2.10L-12.56 120.72M-11.11 2.70L-11.11 121.32M-9.32 3.22L-9.32 121.84M-7.25 3.64L-7.25 122.26M-4.96 3.95L-4.96 122.57M-2.52 4.14L-2.52 122.76M-0.00 4.20L-0.00 122.82M2.52 4.14L2.52 122.76M4.96 3.95L4.96 122.57M7.25 3.64L7.25 122.26M9.32 3.22L9.32 121.84M11.11 2.70L11.11 121.32M12.56 2.10L12.56 120.72M13.63 1.44L13.63 120.06M14.28 0.73L14.28 119.35" stroke="#505050" stroke-width="0.5" fill="none" opacity="0.7"/><g stroke="#151515" stroke-width="0.85" stroke-dasharray="3 4.5" fill="none" opacity="0.8"><path d="M-14.28 0.73L-14.28 119.35" stroke-dashoffset="4.3"/><path d="M-13.63 1.44L-13.63 120.06" stroke-dashoffset="0.3"/><path d="M-12.56 2.10L-12.56 120.72" stroke-dashoffset="3.9"/><path d="M-11.11 2.70L-11.11 121.32" stroke-dashoffset="0.6"/><path d="M-9.32 3.22L-9.32 121.84" stroke-dashoffset="4.5"/><path d="M-7.25 3.64L-7.25 122.26" stroke-dashoffset="0.6"/><path d="M-4.96 3.95L-4.96 122.57" stroke-dashoffset="4.3"/><path d="M-2.52 4.14L-2.52 122.76" stroke-dashoffset="0.7"/><path d="M-0.00 4.20L-0.00 122.82" stroke-dashoffset="4.3"/><path d="M2.52 4.14L2.52 122.76" stroke-dashoffset="0.5"/><path d="M4.96 3.95L4.96 122.57" stroke-dashoffset="4.1"/><path d="M7.25 3.64L7.25 122.26" stroke-dashoffset="0.3"/><path d="M9.32 3.22L9.32 121.84" stroke-dashoffset="4.3"/><path d="M11.11 2.70L11.11 121.32" stroke-dashoffset="0.1"/><path d="M12.56 2.10L12.56 120.72" stroke-dashoffset="4.1"/><path d="M13.63 1.44L13.63 120.06" stroke-dashoffset="0.6"/><path d="M14.28 0.73L14.28 119.35" stroke-dashoffset="4.3"/></g><path d="M-14.5 0 L-14.5 118.6 A14.5 4.2 0 0 0 14.5 118.6 L14.5 0" stroke="#0a0a0a" stroke-width="1.4" fill="none"/><ellipse cx="0" cy="0" rx="14.8" ry="4.5" fill="#101010"/><ellipse cx="0" cy="0.8" rx="11.5" ry="2.2" fill="#333333" opacity="0.7"/><path d="M-12.7 1.2 A12.7 3.4000000000000004 0 0 0 12.7 1.2" stroke="#d8d8d8" stroke-width="1" fill="none"/></g>
<g transform="translate(324.9,167.6) rotate(-2.41)"><path d="M-13.5 0 L-13.5 116.5 A13.5 4.2 0 0 0 13.5 116.5 L13.5 0 Z" fill="url(#cylg)"/><path d="M-9.55 2.70L-9.55 119.20M-7.74 3.22L-7.74 119.72M-5.71 3.64L-5.71 120.14M-3.49 3.95L-3.49 120.45M-1.18 4.14L-1.18 120.64M1.18 4.20L1.18 120.70M3.49 4.14L3.49 120.64M5.71 3.95L5.71 120.45M7.74 3.64L7.74 120.14M9.55 3.22L9.55 119.72M11.06 2.70L11.06 119.20M12.24 2.10L12.24 118.60" stroke="#ffffff" stroke-width="0.9" fill="none" opacity="0.9"/><path d="M-13.29 0.73L-13.29 117.23M-12.69 1.44L-12.69 117.94M-11.69 2.10L-11.69 118.60M-10.34 2.70L-10.34 119.20M-8.68 3.22L-8.68 119.72M-6.75 3.64L-6.75 120.14M-4.62 3.95L-4.62 120.45M-2.34 4.14L-2.34 120.64M-0.00 4.20L-0.00 120.70M2.34 4.14L2.34 120.64M4.62 3.95L4.62 120.45M6.75 3.64L6.75 120.14M8.68 3.22L8.68 119.72M10.34 2.70L10.34 119.20M11.69 2.10L11.69 118.60M12.69 1.44L12.69 117.94M13.29 0.73L13.29 117.23" stroke="#505050" stroke-width="0.5" fill="none" opacity="0.7"/><g stroke="#151515" stroke-width="0.85" stroke-dasharray="3 4.5" fill="none" opacity="0.8"><path d="M-13.29 0.73L-13.29 117.23" stroke-dashoffset="4.3"/><path d="M-12.69 1.44L-12.69 117.94" stroke-dashoffset="0.2"/><path d="M-11.69 2.10L-11.69 118.60" stroke-dashoffset="4.1"/><path d="M-10.34 2.70L-10.34 119.20" stroke-dashoffset="0.4"/><path d="M-8.68 3.22L-8.68 119.72" stroke-dashoffset="4.2"/><path d="M-6.75 3.64L-6.75 120.14" stroke-dashoffset="0.3"/><path d="M-4.62 3.95L-4.62 120.45" stroke-dashoffset="4.3"/><path d="M-2.34 4.14L-2.34 120.64" stroke-dashoffset="0.7"/><path d="M-0.00 4.20L-0.00 120.70" stroke-dashoffset="3.9"/><path d="M2.34 4.14L2.34 120.64" stroke-dashoffset="0.5"/><path d="M4.62 3.95L4.62 120.45" stroke-dashoffset="4.4"/><path d="M6.75 3.64L6.75 120.14" stroke-dashoffset="0.3"/><path d="M8.68 3.22L8.68 119.72" stroke-dashoffset="4.1"/><path d="M10.34 2.70L10.34 119.20" stroke-dashoffset="0.8"/><path d="M11.69 2.10L11.69 118.60" stroke-dashoffset="3.8"/><path d="M12.69 1.44L12.69 117.94" stroke-dashoffset="0.4"/><path d="M13.29 0.73L13.29 117.23" stroke-dashoffset="3.9"/></g><path d="M-13.5 0 L-13.5 116.5 A13.5 4.2 0 0 0 13.5 116.5 L13.5 0" stroke="#0a0a0a" stroke-width="1.4" fill="none"/><ellipse cx="0" cy="0" rx="13.8" ry="4.5" fill="#101010"/><ellipse cx="0" cy="0.8" rx="10.5" ry="2.2" fill="#333333" opacity="0.7"/><path d="M-11.7 1.2 A11.7 3.4000000000000004 0 0 0 11.7 1.2" stroke="#d8d8d8" stroke-width="1" fill="none"/></g>
<g transform="translate(357,163) rotate(-2.25)"><path d="M-13.5 0 L-13.5 114.6 A13.5 4.2 0 0 0 13.5 114.6 L13.5 0 Z" fill="url(#cylg)"/><path d="M-9.55 2.70L-9.55 117.29M-7.74 3.22L-7.74 117.81M-5.71 3.64L-5.71 118.23M-3.49 3.95L-3.49 118.54M-1.18 4.14L-1.18 118.72M1.18 4.20L1.18 118.79M3.49 4.14L3.49 118.72M5.71 3.95L5.71 118.54M7.74 3.64L7.74 118.23M9.55 3.22L9.55 117.81M11.06 2.70L11.06 117.29M12.24 2.10L12.24 116.69" stroke="#ffffff" stroke-width="0.9" fill="none" opacity="0.9"/><path d="M-13.29 0.73L-13.29 115.32M-12.69 1.44L-12.69 116.02M-11.69 2.10L-11.69 116.69M-10.34 2.70L-10.34 117.29M-8.68 3.22L-8.68 117.81M-6.75 3.64L-6.75 118.23M-4.62 3.95L-4.62 118.54M-2.34 4.14L-2.34 118.72M-0.00 4.20L-0.00 118.79M2.34 4.14L2.34 118.72M4.62 3.95L4.62 118.54M6.75 3.64L6.75 118.23M8.68 3.22L8.68 117.81M10.34 2.70L10.34 117.29M11.69 2.10L11.69 116.69M12.69 1.44L12.69 116.02M13.29 0.73L13.29 115.32" stroke="#505050" stroke-width="0.5" fill="none" opacity="0.7"/><g stroke="#151515" stroke-width="0.85" stroke-dasharray="3 4.5" fill="none" opacity="0.8"><path d="M-13.29 0.73L-13.29 115.32" stroke-dashoffset="4.4"/><path d="M-12.69 1.44L-12.69 116.02" stroke-dashoffset="0.8"/><path d="M-11.69 2.10L-11.69 116.69" stroke-dashoffset="4.2"/><path d="M-10.34 2.70L-10.34 117.29" stroke-dashoffset="0.1"/><path d="M-8.68 3.22L-8.68 117.81" stroke-dashoffset="4.2"/><path d="M-6.75 3.64L-6.75 118.23" stroke-dashoffset="0.4"/><path d="M-4.62 3.95L-4.62 118.54" stroke-dashoffset="4.3"/><path d="M-2.34 4.14L-2.34 118.72" stroke-dashoffset="0.4"/><path d="M-0.00 4.20L-0.00 118.79" stroke-dashoffset="4.3"/><path d="M2.34 4.14L2.34 118.72" stroke-dashoffset="0.7"/><path d="M4.62 3.95L4.62 118.54" stroke-dashoffset="4.2"/><path d="M6.75 3.64L6.75 118.23" stroke-dashoffset="0.3"/><path d="M8.68 3.22L8.68 117.81" stroke-dashoffset="4.5"/><path d="M10.34 2.70L10.34 117.29" stroke-dashoffset="0.2"/><path d="M11.69 2.10L11.69 116.69" stroke-dashoffset="4.3"/><path d="M12.69 1.44L12.69 116.02" stroke-dashoffset="0.3"/><path d="M13.29 0.73L13.29 115.32" stroke-dashoffset="4.4"/></g><path d="M-13.5 0 L-13.5 114.6 A13.5 4.2 0 0 0 13.5 114.6 L13.5 0" stroke="#0a0a0a" stroke-width="1.4" fill="none"/><ellipse cx="0" cy="0" rx="13.8" ry="4.5" fill="#101010"/><ellipse cx="0" cy="0.8" rx="10.5" ry="2.2" fill="#333333" opacity="0.7"/><path d="M-11.7 1.2 A11.7 3.4000000000000004 0 0 0 11.7 1.2" stroke="#d8d8d8" stroke-width="1" fill="none"/></g>
<g transform="translate(386.8,159.2) rotate(-2.04)"><path d="M-13.0 0 L-13.0 112.4 A13.0 4.2 0 0 0 13.0 112.4 L13.0 0 Z" fill="url(#cylg)"/><path d="M-9.19 2.70L-9.19 115.07M-7.46 3.22L-7.46 115.59M-5.49 3.64L-5.49 116.01M-3.36 3.95L-3.36 116.32M-1.13 4.14L-1.13 116.51M1.13 4.20L1.13 116.57M3.36 4.14L3.36 116.51M5.49 3.95L5.49 116.32M7.46 3.64L7.46 116.01M9.19 3.22L9.19 115.59M10.65 2.70L10.65 115.07M11.78 2.10L11.78 114.47" stroke="#ffffff" stroke-width="0.9" fill="none" opacity="0.9"/><path d="M-12.80 0.73L-12.80 113.10M-12.22 1.44L-12.22 113.81M-11.26 2.10L-11.26 114.47M-9.96 2.70L-9.96 115.07M-8.36 3.22L-8.36 115.59M-6.50 3.64L-6.50 116.01M-4.45 3.95L-4.45 116.32M-2.26 4.14L-2.26 116.51M-0.00 4.20L-0.00 116.57M2.26 4.14L2.26 116.51M4.45 3.95L4.45 116.32M6.50 3.64L6.50 116.01M8.36 3.22L8.36 115.59M9.96 2.70L9.96 115.07M11.26 2.10L11.26 114.47M12.22 1.44L12.22 113.81M12.80 0.73L12.80 113.10" stroke="#505050" stroke-width="0.5" fill="none" opacity="0.7"/><g stroke="#151515" stroke-width="0.85" stroke-dasharray="3 4.5" fill="none" opacity="0.8"><path d="M-12.80 0.73L-12.80 113.10" stroke-dashoffset="3.8"/><path d="M-12.22 1.44L-12.22 113.81" stroke-dashoffset="0.8"/><path d="M-11.26 2.10L-11.26 114.47" stroke-dashoffset="4.0"/><path d="M-9.96 2.70L-9.96 115.07" stroke-dashoffset="0.0"/><path d="M-8.36 3.22L-8.36 115.59" stroke-dashoffset="4.0"/><path d="M-6.50 3.64L-6.50 116.01" stroke-dashoffset="0.3"/><path d="M-4.45 3.95L-4.45 116.32" stroke-dashoffset="3.8"/><path d="M-2.26 4.14L-2.26 116.51" stroke-dashoffset="0.3"/><path d="M-0.00 4.20L-0.00 116.57" stroke-dashoffset="4.1"/><path d="M2.26 4.14L2.26 116.51" stroke-dashoffset="0.6"/><path d="M4.45 3.95L4.45 116.32" stroke-dashoffset="4.0"/><path d="M6.50 3.64L6.50 116.01" stroke-dashoffset="0.2"/><path d="M8.36 3.22L8.36 115.59" stroke-dashoffset="3.9"/><path d="M9.96 2.70L9.96 115.07" stroke-dashoffset="0.6"/><path d="M11.26 2.10L11.26 114.47" stroke-dashoffset="4.5"/><path d="M12.22 1.44L12.22 113.81" stroke-dashoffset="0.4"/><path d="M12.80 0.73L12.80 113.10" stroke-dashoffset="3.9"/></g><path d="M-13.0 0 L-13.0 112.4 A13.0 4.2 0 0 0 13.0 112.4 L13.0 0" stroke="#0a0a0a" stroke-width="1.4" fill="none"/><ellipse cx="0" cy="0" rx="13.3" ry="4.5" fill="#101010"/><ellipse cx="0" cy="0.8" rx="10.0" ry="2.2" fill="#333333" opacity="0.7"/><path d="M-11.2 1.2 A11.2 3.4000000000000004 0 0 0 11.2 1.2" stroke="#d8d8d8" stroke-width="1" fill="none"/></g>
<line x1="55" y1="244" x2="275" y2="325" stroke="#d2eadc" stroke-width="1.2" opacity="0.85"/>
<line x1="55" y1="226.7" x2="280" y2="254.5" stroke="#d2eadc" stroke-width="1.2" opacity="0.85"/>
<line x1="55" y1="323.7" x2="100" y2="314.8" stroke="#c09a90" stroke-width="0.9"/>
<path d="M86.5 195.2L156.4 185.4M86.5 195.2L90.4 220.8M92.4 201.1L164.3 191.9M92.4 201.1L97.3 229.6M99.3 302L103.2 328.6L169 313.8M106.6 311.9L109.1 337.4L177 323.7M339.6 160.6L392.4 153.1L393.4 175.2M352.2 166.1L405 157.9L407 182.3M395.5 245.6L396 268.6L345.3 277.5M408.5 253.3L409 275.1L357.7 285.8" stroke="#f2a02a" stroke-width="1" fill="none"/>
<circle cx="388.7" cy="216.5" r="1.8" fill="#f5a020"/>
<path d="M81.4 143.5L85.9 180.8M81 143L90 150L83.5 151" stroke="#e24a4a" stroke-width="1" fill="none"/>
<path d="M169 154L209.4 149L213 182" stroke="#3040e0" stroke-width="1" fill="none"/>
<path d="M186 151.5L209.4 149L210.5 168Z" fill="#7080e0" fill-opacity="0.4" stroke="#3040e0" stroke-width="0.9"/>
<path d="M151.5 227.7L188.9 222.8L198.7 230.6" stroke="#25d040" stroke-width="1.2" fill="none"/>
<line x1="100" y1="116" x2="115" y2="264" stroke="#33e033" stroke-width="1.4"/>
<path d="M95.7 91.4L91.9 117.5Q98 120 105.3 116.5Z" fill="#22dd22"/>
<line x1="115" y1="264" x2="262" y2="238.5" stroke="#e23030" stroke-width="1.4"/>
<path d="M256.3 233.5L281 237.2L260.8 245Z" fill="#e42222"/>
<line x1="84.5" y1="227.7" x2="115" y2="264" stroke="#2a2ae6" stroke-width="1.4"/>
<polygon points="84.5,221.8 89.7,224.8 89.7,230.6 84.5,233.6 79.3,230.6 79.3,224.8" fill="#2525ee"/>
<circle cx="115" cy="264" r="2" fill="#f5a020"/>
</svg></div><div id="vpb"></div>
<div class="hdr" style="left:432px;top:82px;width:310px;height:20px"><span class="ht1">CLONER SETUP</span></div>
<div class="panel" style="left:431px;top:103px;width:381px;height:314px"></div>
<svg class="abs" style="left:436px;top:108px" width="20" height="20" viewBox="0 0 20 20">
<path d="M9 2.6 L15 6 L15 12.6 L9 16 L3 12.6 L3 6 Z" fill="#e6e6e6" stroke="#e6e6e6" stroke-width="1.2" stroke-linejoin="round"/>
<path d="M9 9.3 L15 6 L15 12.6 L9 16 Z" fill="#c4c4c4"/>
<path d="M9 9.3 L15 6 M9 9.3 L3 6 M9 9.3 L9 16" stroke="#9a9a9a" stroke-width="0.9" fill="none"/>
<g fill="#32e07a" stroke="#2a2a2a" stroke-width="0.5"><circle cx="9.3" cy="2.5" r="1.8"/><circle cx="16.5" cy="5.7" r="1.8"/><circle cx="16.5" cy="14.2" r="1.8"/><circle cx="9" cy="17.8" r="1.8"/><circle cx="2" cy="14.2" r="1.8"/><circle cx="2" cy="5.5" r="1.8"/><circle cx="9" cy="9.2" r="1.7"/></g>
</svg>
<div class="t ttl" style="left:460px;top:110px;">Cloner Object [Cloner]</div>
<div class="tab tl" style="left:435px;top:132px;width:58px;height:16px">Basic</div>
<div class="tab" style="left:494px;top:132px;width:58px;height:16px">Coord.</div>
<div class="tab sel" style="left:553px;top:132px;width:58px;height:16px">Object</div>
<div class="tab" style="left:612px;top:132px;width:58px;height:16px">Transform</div>
<div class="tab tr" style="left:671px;top:132px;width:58px;height:16px">Effectors</div>
<div class="oph" style="left:434px;top:154px;width:373px;height:15px">Object Properties</div>
<div class="rad" style="left:435.9px;top:175.5px"></div>
<div class="t" style="left:454px;top:174.5px;">Mode</div>
<div class="dd" style="left:494px;top:174px;width:311px;height:16px"><svg class="abs" style="left:6px;top:1px" width="14" height="14" viewBox="0 0 14 14"><rect x="1" y="10" width="2.2" height="2.2" fill="#3be36a"/><rect x="4.5" y="6.7" width="2" height="2" fill="#eee"/><rect x="7.9" y="3.3" width="2" height="2" fill="#eee"/><rect x="10.8" y="0" width="2.2" height="2.2" fill="#eee"/></svg><span style="left:24px">Linear</span><i class="arr"></i></div>
<div class="sep" style="left:434px;top:194px;width:372px"></div>
<div class="rad" style="left:435.9px;top:202.0px"></div>
<div class="t" style="left:454px;top:201px;">Clones</div>
<div class="dd" style="left:494px;top:200px;width:311px;height:16px"><span>Iterate</span><i class="arr"></i></div>
<div class="rad" style="left:435.9px;top:220.6px"></div>
<div class="t" style="left:454px;top:219.6px;">Fix Clone <span class="dots">. . . . . .</span></div>
<div class="chk on" style="left:546px;top:220px"><svg width="13" height="12" viewBox="0 0 13 12" style="position:absolute;left:-1px;top:-1px"><path d="M1.8 6.2 L2.6 10.6 L11.8 1.5" stroke="#d4d4d4" stroke-width="1.9" fill="none" stroke-linejoin="round"/></svg></div>
<div class="rad" style="left:576.8px;top:220.6px"></div>
<div class="t" style="left:595px;top:219.6px;">Fix Texture</div>
<div class="dd" style="left:654px;top:219px;width:87px;height:16px"><span>Off</span><i class="arr"></i></div>
<div class="rad" style="left:435.9px;top:239.0px"></div>
<div class="t" style="left:454px;top:238px;">Render Instances</div>
<div class="chk" style="left:546px;top:239.5px"></div>
<div class="sep" style="left:434px;top:257px;width:372px"></div>
<div class="rad" style="left:435.9px;top:264.7px"></div>
<div class="t" style="left:454px;top:263.7px;">Count</div>
<div class="fld" style="left:500px;top:263px;width:66px;height:16px"><span>9</span><i class="su"></i><i class="sd"></i></div>
<div class="sld" style="left:566px;top:263px;width:239px;height:16px"><b style="width:22px"></b><u style="left:22px"></u><em></em></div>
<div class="rad" style="left:435.9px;top:284.8px"></div>
<div class="t" style="left:454px;top:283.8px;">Offset</div>
<div class="fld" style="left:500px;top:283px;width:66px;height:16px"><span>0</span><i class="su"></i><i class="sd"></i></div>
<div class="sld" style="left:566px;top:283px;width:239px;height:16px"><b style="width:0px"></b><u style="left:0px"></u><em></em></div>
<div class="sep" style="left:434px;top:305px;width:372px"></div>
<div class="rad" style="left:435.9px;top:312.0px"></div>
<div class="t" style="left:454px;top:311px;">Mode <span class="dots">. .</span></div>
<div class="dd" style="left:500px;top:311px;width:305px;height:16px"><span>Per Step</span><i class="arr"></i></div>
<div class="rad" style="left:435.9px;top:330.7px"></div>
<div class="t" style="left:454px;top:329.7px;">Amount</div>
<div class="fld" style="left:500px;top:330px;width:66px;height:16px"><span>100 %</span><i class="su"></i><i class="sd"></i></div>
<div class="sld" style="left:566px;top:330px;width:239px;height:16px"><b style="width:236px"></b><u style="left:236px"></u><em></em></div>
<div class="rad" style="left:435.9px;top:350.8px"></div>
<div class="t sp" style="left:454px;top:349.8px;">P . X</div>
<div class="fld" style="left:480px;top:349px;width:66px;height:16px"><span>109 cm</span><i class="su"></i><i class="sd"></i></div>
<div class="rad" style="left:551.0px;top:350.8px"></div>
<div class="t sp" style="left:569px;top:349.8px;">S . X</div>
<div class="fld" style="left:595px;top:349px;width:66px;height:16px"><span>100 %</span><i class="su"></i><i class="sd"></i></div>
<div class="rad" style="left:666.0px;top:350.8px"></div>
<div class="t sp" style="left:684px;top:349.8px;">R . H</div>
<div class="fld" style="left:713px;top:349px;width:66px;height:16px"><span>0 °</span><i class="su"></i><i class="sd"></i></div>
<div class="rad" style="left:435.9px;top:371.0px"></div>
<div class="t sp" style="left:454px;top:370px;">P . Y</div>
<div class="fld" style="left:480px;top:369px;width:66px;height:16px"><span>0 cm</span><i class="su"></i><i class="sd"></i></div>
<div class="rad" style="left:551.0px;top:371.0px"></div>
<div class="t sp" style="left:569px;top:370px;">S . Y</div>
<div class="fld" style="left:595px;top:369px;width:66px;height:16px"><span>100 %</span><i class="su"></i><i class="sd"></i></div>
<div class="rad" style="left:666.0px;top:371.0px"></div>
<div class="t sp" style="left:684px;top:370px;">R . P</div>
<div class="fld" style="left:713px;top:369px;width:66px;height:16px"><span>0 °</span><i class="su"></i><i class="sd"></i></div>
<div class="rad" style="left:435.9px;top:391.0px"></div>
<div class="t sp" style="left:454px;top:390px;">P . Z</div>
<div class="fld" style="left:480px;top:389px;width:66px;height:16px"><span>0 cm</span><i class="su"></i><i class="sd"></i></div>
<div class="rad" style="left:551.0px;top:391.0px"></div>
<div class="t sp" style="left:569px;top:390px;">S . Z</div>
<div class="fld" style="left:595px;top:389px;width:66px;height:16px"><span>100 %</span><i class="su"></i><i class="sd"></i></div>
<div class="rad" style="left:666.0px;top:391.0px"></div>
<div class="t sp" style="left:684px;top:390px;">R . B</div>
<div class="fld" style="left:713px;top:389px;width:66px;height:16px"><span>0 °</span><i class="su"></i><i class="sd"></i></div>
<div class="sep" style="left:434px;top:410px;width:372px"></div>
<div class="hdr h2" style="left:311px;top:306px;width:113px;height:17px"><span class="ht2">CYLINDER SETUP</span></div>
<div class="panel" style="left:191px;top:322px;width:234px;height:152px"></div>
<svg class="abs" style="left:197px;top:327px" width="12" height="16" viewBox="0 0 12 16">
<path d="M2 3 L2 12.3 A4 1.8 0 0 0 10 12.3 L10 3 Z" fill="#8ecbf7"/><ellipse cx="6" cy="3" rx="4" ry="1.6" fill="#a6d8fb"/><path d="M2.3 4.3 Q6 5.6 9.7 4.3" stroke="#6a8aa8" stroke-width="0.6" fill="none"/></svg>
<div class="t2 ttl2" style="left:215px;top:328.5px;">Cylinder Object [Cylinder 1]</div>
<div class="tab tab2 tl" style="left:195px;top:346px;width:34px;height:13px">Basic</div>
<div class="tab tab2" style="left:229.5px;top:346px;width:35.0px;height:13px">Coord.</div>
<div class="tab tab2 sel" style="left:265px;top:346px;width:34px;height:13px">Object</div>
<div class="tab tab2" style="left:300.5px;top:346px;width:34.0px;height:13px">Caps</div>
<div class="tab tab2" style="left:335.5px;top:346px;width:34.5px;height:13px">Slice</div>
<div class="tab tab2 tr" style="left:370.5px;top:346px;width:34.5px;height:13px">Phong</div>
<div class="oph oph2" style="left:193px;top:364px;width:230px;height:12px">Object Properties</div>
<div class="rad rs" style="left:194.8px;top:381.9px"></div>
<div class="t2" style="left:210.5px;top:380.9px;">Radius <span class="dots">. . . . . . . . . .</span></div>
<div class="fld fld2" style="left:294px;top:381px;width:54px;height:13px"><span>44 cm</span><i class="su"></i><i class="sd"></i></div>
<div class="rad rs" style="left:194.8px;top:398.2px"></div>
<div class="t2" style="left:210.5px;top:397.2px;">Height <span class="dots">. . . . . . . . . .</span></div>
<div class="fld fld2" style="left:294px;top:397px;width:54px;height:13px"><span>398 cm</span><i class="su"></i><i class="sd"></i></div>
<div class="rad rs" style="left:194.8px;top:414.8px"></div>
<div class="t2" style="left:210.5px;top:413.7px;">Height Segments</div>
<div class="fld fld2" style="left:294px;top:413px;width:54px;height:13px"><span>1</span><i class="su"></i><i class="sd"></i></div>
<div class="rad rs" style="left:194.8px;top:431.1px"></div>
<div class="t2" style="left:210.5px;top:430px;">Rotation Segments</div>
<div class="fld fld2" style="left:294px;top:430px;width:54px;height:13px"><span>36</span><i class="su"></i><i class="sd"></i></div>
<div class="rad rs" style="left:194.8px;top:447.4px"></div>
<div class="t2" style="left:210.5px;top:446.4px;">Orientation <span class="dots">. . . . . .</span></div>
<div class="dd dd2" style="left:294px;top:446px;width:59px;height:14px"><span>+Y</span><i class="arr"></i></div>
</body></html>
